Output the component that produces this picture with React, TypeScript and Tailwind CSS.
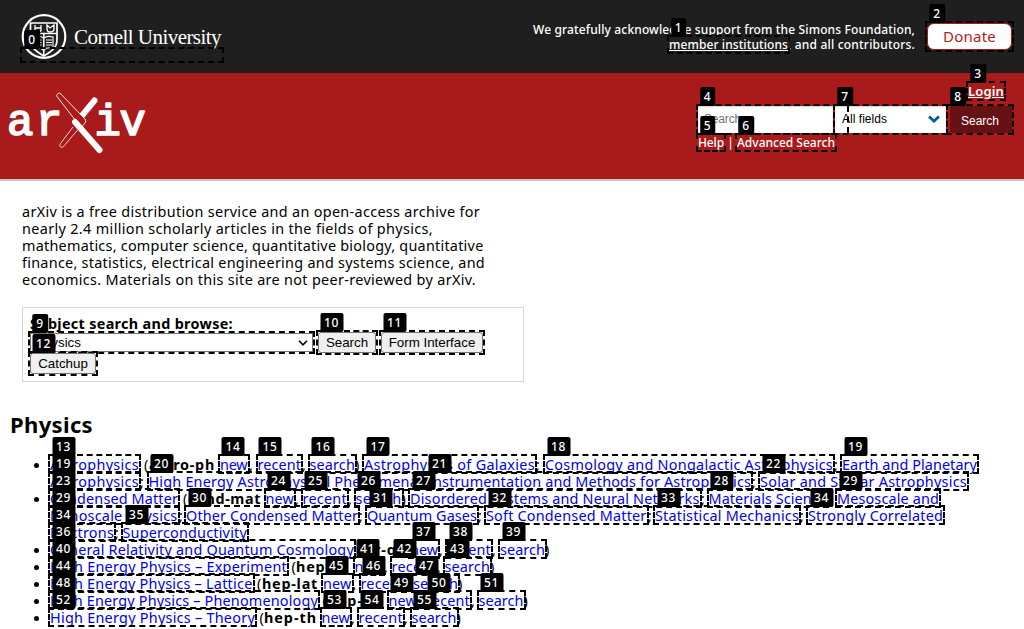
import { useLayoutEffect, useRef } from "react";

function Fit({ text, width, className = "" }: { text: string; width: number; className?: string }) {
  const ref = useRef<HTMLSpanElement>(null);
  useLayoutEffect(() => {
    const el = ref.current;
    if (!el) return;
    el.style.letterSpacing = "0px";
    const natural = el.getBoundingClientRect().width;
    el.style.letterSpacing = `${(width - natural) / Math.max(1, text.length)}px`;
  }, [text, width]);
  return (
    <span ref={ref} className={`inline-block whitespace-pre ${className}`}>
      {text}
    </span>
  );
}

const Outline = ({ className }: { className: string }) => (
  <span className={`pointer-events-none absolute border-2 border-dashed border-black ${className}`} />
);

type Seg = [kind: "a" | "b" | "t", text: string, start: number, end: number];

const rows: { bullet: boolean; segs: Seg[] }[] = [
  { bullet: true, segs: [["a", "Astrophysics", 50, 139], ["t", "(", 144, 149], ["b", "astro-ph", 149, 215], ["a", "new", 220, 247.5], ["t", ",", 249, 253], ["a", "recent", 257.5, 301], ["t", ",", 302, 306], ["a", "search", 309.5, 355], ["t", ")", 355, 360], ["a", "Astrophysics of Galaxies", 364, 535], ["t", ";", 536, 540], ["a", "Cosmology and Nongalactic Astrophysics", 545, 833], ["t", ";", 834, 838], ["a", "Earth and Planetary", 842, 977]] },
  { bullet: false, segs: [["a", "Astrophysics", 50, 139], ["t", ";", 140, 144], ["a", "High Energy Astrophysical Phenomena", 148.5, 418], ["t", ";", 419, 423], ["a", "Instrumentation and Methods for Astrophysics", 428, 751], ["t", ";", 752, 756], ["a", "Solar and Stellar Astrophysics", 760, 967]] },
  { bullet: true, segs: [["a", "Condensed Matter", 50, 178], ["t", "(", 183, 188], ["b", "cond-mat", 188, 261], ["a", "new", 265.5, 294], ["t", ",", 295, 299], ["a", "recent", 302.5, 347], ["t", ",", 348, 352], ["a", "search", 355.5, 401.5], ["t", ")", 401.5, 406], ["a", "Disordered Systems and Neural Networks", 410, 699.5], ["t", ";", 701, 705], ["a", "Materials Science", 708.5, 827], ["t", ";", 828, 832], ["a", "Mesoscale and", 837, 939]] },
  { bullet: false, segs: [["a", "Nanoscale Physics", 50, 177.5], ["t", ";", 179, 183], ["a", "Other Condensed Matter", 186, 358], ["t", ";", 359, 363], ["a", "Quantum Gases", 367, 477], ["t", ";", 478, 482], ["a", "Soft Condensed Matter", 486, 646.5], ["t", ";", 648, 652], ["a", "Statistical Mechanics", 655, 799], ["t", ";", 800, 804], ["a", "Strongly Correlated", 808, 943]] },
  { bullet: false, segs: [["a", "Electrons", 50, 114], ["t", ";", 115, 119], ["a", "Superconductivity", 122.5, 247]] },
  { bullet: true, segs: [["a", "General Relativity and Quantum Cosmology", 50, 354], ["t", "(", 359, 364], ["b", "gr-qc", 364, 405], ["a", "new", 410, 438], ["t", ",", 439, 443], ["a", "recent", 447, 491], ["t", ",", 492, 496], ["a", "search", 500, 545], ["t", ")", 545, 549]] },
  { bullet: true, segs: [["a", "High Energy Physics – Experiment", 50, 287], ["t", "(", 291.5, 296], ["b", "hep-ex", 296, 349], ["a", "new", 354.5, 383], ["t", ",", 384, 388], ["a", "recent", 391.5, 436], ["t", ",", 437, 441], ["a", "search", 444.5, 490], ["t", ")", 490, 494]] },
  { bullet: true, segs: [["a", "High Energy Physics – Lattice", 50, 252.5], ["t", "(", 257, 262], ["b", "hep-lat", 262, 318], ["a", "new", 323, 351.5], ["t", ",", 352.5, 356], ["a", "recent", 360.5, 404.5], ["t", ",", 405.5, 409], ["a", "search", 413, 458], ["t", ")", 458, 462]] },
  { bullet: true, segs: [["a", "High Energy Physics – Phenomenology", 50, 318], ["t", "(", 322.5, 327], ["b", "hep-ph", 327, 384], ["a", "new", 388.5, 417], ["t", ",", 418, 422], ["a", "recent", 426, 470], ["t", ",", 471, 475], ["a", "search", 478.5, 523.5], ["t", ")", 523.5, 528]] },
  { bullet: true, segs: [["a", "High Energy Physics – Theory", 50, 255], ["t", "(", 259.5, 264], ["b", "hep-th", 264, 317], ["a", "new", 321.5, 350], ["t", ",", 351, 355], ["a", "recent", 358.5, 403], ["t", ",", 404, 408], ["a", "search", 411.5, 456.5], ["t", ")", 456.5, 461]] },
];

const badges: [label: string, center: number, top: number][] = [
  ["0", 32, 30], ["1", 678.5, 18], ["2", 937, 4], ["3", 978, 64], ["4", 707.5, 87], ["7", 845, 87], ["8", 958, 87], ["5", 707.5, 116], ["6", 746, 116],
  ["9", 40, 314], ["10", 331.5, 313], ["11", 394.5, 313], ["12", 43.5, 334],
  ["13", 63.5, 437], ["14", 233, 437], ["15", 270, 437], ["16", 323, 437], ["17", 378, 437], ["18", 558.5, 437], ["19", 855.5, 437],
  ["19", 63.5, 454], ["20", 161.5, 454], ["21", 439.5, 454], ["22", 773.5, 454],
  ["23", 63.5, 471], ["24", 278.5, 471], ["25", 315.5, 471], ["26", 368.5, 471], ["27", 423.5, 471], ["28", 721.5, 471], ["29", 850.5, 471],
  ["29", 63.5, 488], ["30", 199.5, 488], ["31", 380.5, 488], ["32", 499.5, 488], ["33", 668.5, 488], ["34", 821.5, 488],
  ["34", 63.5, 505], ["35", 136.5, 505],
  ["36", 63.5, 522], ["37", 423.5, 522], ["38", 460.5, 522], ["39", 513.5, 522],
  ["40", 63.5, 539], ["41", 367.5, 539], ["42", 404.5, 539], ["43", 457.5, 539],
  ["44", 63.5, 556], ["45", 336.5, 556], ["46", 373.5, 556], ["47", 426.5, 556],
  ["48", 63.5, 573], ["49", 401.5, 573], ["50", 439, 573], ["51", 491.5, 573],
  ["52", 63.5, 590], ["53", 334.5, 590], ["54", 372, 590], ["55", 424.5, 590],
];

function Row({ bullet, segs }: { bullet: boolean; segs: Seg[] }) {
  let pos = 42;
  return (
    <li className="flex h-[17px] items-center leading-[17px]">
      <span className="ml-[34px] flex w-2 shrink-0 items-center">
        {bullet && <span className="mt-0.5 h-[5px] w-[5px] rounded-full bg-black" />}
      </span>
      {segs.map(([kind, text, start, end], i) => {
        const gap = start - pos;
        pos = end;
        return (
          <span key={i} className="relative h-[17px] shrink-0" style={{ marginLeft: gap, width: end - start }}>
            <Fit
              text={text}
              width={end - start}
              className={kind === "a" ? "text-[#0000ee]" : kind === "b" ? "font-bold text-black" : "text-black"}
            />
            {kind === "a" && <Outline className="-top-0.5 -right-0.5 -bottom-px -left-0.5" />}
          </span>
        );
      })}
    </li>
  );
}

function Seal() {
  return (
    <svg className="h-[46px] w-[46px] shrink-0" viewBox="0 0 46 46" fill="none" stroke="#fff">
      <circle cx="23" cy="22.500" r="21.300" strokeWidth="2.200" />
      <path d="M9.500 9h26.500v17c0 8-6 11.500-13.200 16C15.500 37.500 9.500 34 9.500 26Z" strokeWidth="1.700" />
      <path d="M10 19.500h26M22.800 20v21" strokeWidth="1.500" />
      <path d="M14 11v5c0 1 1 2 3 2s3-1 3-2v-5M14 14h6M26 11v4c0 2 1 3 3 3s4-1 4-3v-4l-4 3Z" strokeWidth="1.300" />
      <path d="M13 23c3-1 7-1 9.500 1 3-2 6-2 9.500-1v11c-3-.5-7-.5-9.500 2-3-2.500-6-2.500-9.500-2ZM14.500 26h6M14.500 28.500h6M14.500 31h6M25 26h6M25 28.500h6M25 31h6" strokeWidth="1.100" />
    </svg>
  );
}

function ArxivLogo() {
  return (
    <svg className="h-[64px] w-[140px]" viewBox="0 0 140 64" fill="none">
      <g
        fill="#fff"
        stroke="#fff"
        strokeWidth="1.700"
        strokeLinejoin="round"
        fontFamily="Liberation Mono, monospace"
        fontSize="44"
      >
        <text x="-1" y="44">a</text>
        <text x="28" y="44">r</text>
        <text x="86.500" y="44">i</text>
        <text x="111.500" y="44">v</text>
      </g>
      <path d="M86.500 10 57 53.500" stroke="#a91a1a" strokeWidth="9" />
      <path d="M86.500 9.500 72 27" stroke="#fff" strokeWidth="6" strokeLinecap="round" />
      <path d="M65 36 52.500 52.500c-2 3 1 5 3 3l14.500-17" stroke="#fff" strokeWidth=".8" />
      <path d="m49.500 3 .5-.5c1-.7 2-.4 3 .6l24 25c1 1.200 1 2.500 0 4l-4 4.500L49 5.500c-.6-1-.3-1.800.5-2.500Z" fill="#a91a1a" stroke="#fff" strokeWidth=".9" />
      <path d="M67 31 91.500 59" stroke="#fff" strokeWidth="6" strokeLinecap="round" />
    </svg>
  );
}

const intro: [string, number][] = [
  ["arXiv is a free distribution service and an open-access archive for", 458],
  ["nearly 2.4 million scholarly articles in the fields of physics,", 411],
  ["mathematics, computer science, quantitative biology, quantitative", 461.5],
  ["finance, statistics, electrical engineering and systems science, and", 463],
  ["economics. Materials on this site are not peer-reviewed by arXiv.", 454],
];

const grayButton =
  "relative flex h-[21px] items-center justify-center rounded-[3px] border border-[#767676] bg-[#efefef] font-['Liberation_Sans',sans-serif] text-[13.33px] text-black";

export default function App() {
  return (
    <div className="relative h-[629px] w-[1024px] overflow-hidden bg-white font-['Noto_Sans',sans-serif] text-[14.4px] text-black">
      <header>
        <div className="flex h-[73px] justify-between bg-[#1f1f1f] text-white">
          <div className="relative flex h-[73px] items-center pl-[21px]">
            <Seal />
            <span className="ml-[7px] w-[147px] font-['Liberation_Serif',serif] text-[21px] leading-[28px]">
              <Fit text="Cornell University" width={147} />
            </span>
            <Outline className="top-[47px] left-5 h-4 w-[204px]" />
          </div>
          <div className="flex items-center gap-3 pr-3">
            <div className="flex flex-col items-end text-[12px] leading-[15px] font-medium">
              <Fit text="We gratefully acknowledge support from the Simons Foundation," width={382} />
              <div className="flex">
                <a className="relative">
                  <Fit text="member institutions" width={119} className="underline" />
                  <Outline className="-top-0.5 -right-0.5 -bottom-0.5 -left-0.5" />
                </a>
                <Fit text=", and all contributors." width={127} />
              </div>
            </div>
            <a className="relative flex h-[27px] w-[85px] items-center justify-center rounded-[7px] border border-[#b31b1b] bg-white text-[15px] text-[#b31b1b]">
              <Fit text="Donate" width={53} />
              <Outline className="-inset-[3px]" />
            </a>
          </div>
        </div>
        <div className="flex h-[108px] justify-between border-b-2 border-[#c8c3c3] bg-[#a91a1a] text-white">
          <div className="pt-[18px] pl-2">
            <ArxivLogo />
          </div>
          <div className="flex w-[326px] flex-col pt-[9px]">
            <a className="relative ml-[270px] h-[18px] w-9 text-[13px] leading-[18px] font-semibold">
              <Fit text="Login" width={36} className="underline" />
              <Outline className="-inset-x-0.5 -top-px -bottom-px" />
            </a>
            <div className="mt-[6px] flex h-[27px] font-['Liberation_Sans',sans-serif] text-[12px]">
              <div className="relative flex w-[135px] items-center bg-white pb-0.5 pl-1.5 text-[#757575] shadow-[inset_0_1px_2px_rgba(0,0,0,0.2)]">
                <Fit text="Search" width={37} />
                <Outline className="-top-0.5 -left-0.5 h-[31px] w-[153px]" />
              </div>
              <div className="relative ml-0.5 flex w-[111px] items-center justify-between bg-white pr-1.5 pb-0.5 pl-[7px] text-black shadow-[inset_0_1px_2px_rgba(0,0,0,0.2)]">
                <Fit text="All fields" width={45} />
                <svg className="h-2 w-3" viewBox="0 0 12 8" fill="none" stroke="#005e9d" strokeWidth="2.800">
                  <path d="m1 1.500 5 4.500 5-4.500" />
                </svg>
                <Outline className="-inset-0.5" />
                <span className="absolute top-0 left-[12px] h-full border-l-2 border-dashed border-black" />
              </div>
              <div className="relative ml-1 flex w-[62px] items-center justify-center bg-[#661113] pt-0.5 pr-0.5 text-white">
                <Fit text="Search" width={38} />
                <Outline className="-top-0.5 -right-0.5 -bottom-0.5 -left-1" />
              </div>
            </div>
            <div className="mt-0.5 flex h-[15px] text-[12px] leading-[15px] font-medium">
              <a className="relative w-[26px]">
                <Fit text="Help" width={26} />
                <Outline className="-inset-0.5" />
              </a>
              <span className="w-[13px] text-center">|</span>
              <a className="relative">
                <Fit text="Advanced Search" width={98} />
                <Outline className="-inset-0.5" />
              </a>
            </div>
          </div>
        </div>
      </header>

      <main>
        <p className="mt-[22px] ml-[22px] flex flex-col items-start leading-[17px]">
          {intro.map(([line, w]) => (
            <Fit key={line} text={line} width={w} />
          ))}
        </p>

        <section className="mt-[19px] ml-[22px] h-[75px] w-[502px] border border-[#d6d6d6] pt-2 pl-[7px]">
          <div className="h-[16px] font-bold leading-[16px]">
            <Fit text="Subject search and browse:" width={203} />
          </div>
          <div className="flex items-center">
            <div className="relative flex h-[19px] w-[283px] items-center justify-between border border-[#767676] pr-1 pl-1 font-['Liberation_Sans',sans-serif] text-[13.33px]">
              Physics
              <svg className="h-1.5 w-2.5" viewBox="0 0 10 6" fill="none" stroke="#000" strokeWidth="1.600">
                <path d="m1 .8 4 4 4-4" />
              </svg>
              <Outline className="-inset-[3px]" />
            </div>
            <button className={`${grayButton} ml-[5px] w-[58px]`}>
              Search
              <Outline className="-inset-[3px]" />
            </button>
            <button className={`${grayButton} ml-[5px] w-[102px]`}>
              Form Interface
              <Outline className="-inset-[3px]" />
            </button>
          </div>
          <button className={`${grayButton} w-[66px]`}>
            Catchup
            <Outline className="-inset-[3px]" />
          </button>
        </section>

        <h2 className="mt-[27px] ml-[10px] text-[22px] leading-[30px] font-bold">
          <Fit text="Physics" width={83} />
        </h2>

        <ul className="mt-[17px]">
          {rows.map((row, i) => (
            <Row key={i} {...row} />
          ))}
        </ul>
      </main>

      {badges.map(([label, center, top], i) => (
        <span
          key={i}
          className="absolute flex h-[19px] -translate-x-1/2 items-center justify-center rounded-[2px] bg-black px-1 text-[12px] leading-none font-medium text-white"
          style={{ left: center, top }}
        >
          <Fit text={label} width={label.length * 7.5} />
        </span>
      ))}
    </div>
  );
}
